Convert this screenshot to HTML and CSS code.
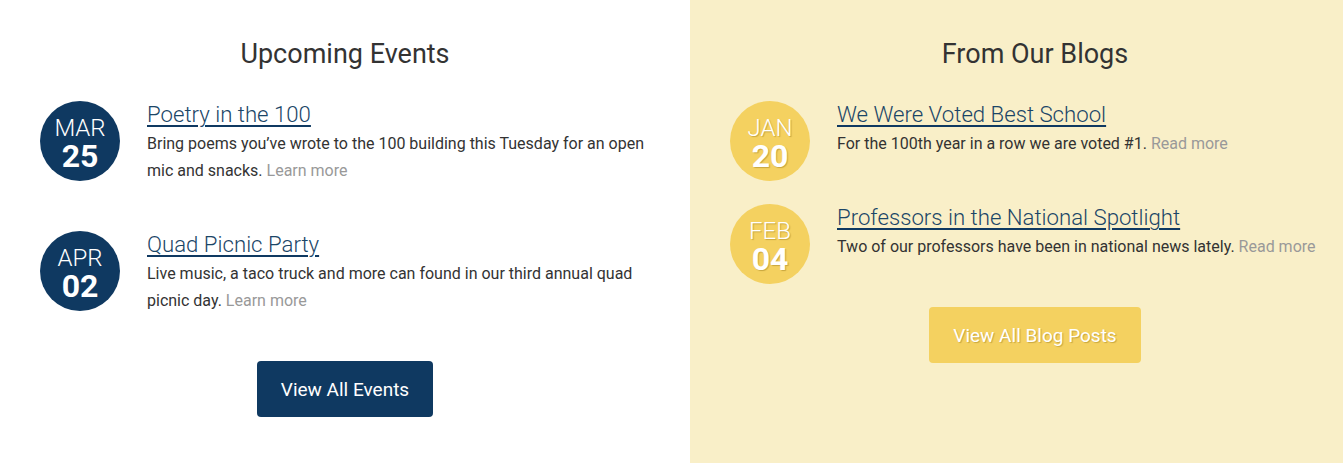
FILE: index.html
```html
<!DOCTYPE html>
<html lang="en">
<head>
<meta charset="utf-8">
<title>Events and Blogs</title>
<link rel="stylesheet" href="styles.css">
</head>
<body>
<div class="split">
  <section class="col col-events">
    <h2 class="col-title">Upcoming Events</h2>
    <div class="item">
      <div class="date date-navy"><span class="month">MAR</span><span class="day">25</span></div>
      <div class="item-body">
        <h3 class="item-title"><a href="#">Poetry in the 100</a></h3>
        <p class="item-text">Bring poems you’ve wrote to the 100 building this Tuesday for an open mic and snacks. <a class="more" href="#">Learn more</a></p>
      </div>
    </div>
    <div class="item">
      <div class="date date-navy"><span class="month">APR</span><span class="day">02</span></div>
      <div class="item-body">
        <h3 class="item-title"><a href="#">Quad Picnic Party</a></h3>
        <p class="item-text">Live music, a taco truck and more can found in our third annual quad picnic day. <a class="more" href="#">Learn more</a></p>
      </div>
    </div>
    <div class="actions"><a class="btn btn-navy" href="#">View All Events</a></div>
  </section>
  <section class="col col-blogs">
    <h2 class="col-title">From Our Blogs</h2>
    <div class="item">
      <div class="date date-yellow"><span class="month">JAN</span><span class="day">20</span></div>
      <div class="item-body">
        <h3 class="item-title"><a href="#">We Were Voted Best School</a></h3>
        <p class="item-text">For the 100th year in a row we are voted #1. <a class="more" href="#">Read more</a></p>
      </div>
    </div>
    <div class="item">
      <div class="date date-yellow"><span class="month">FEB</span><span class="day">04</span></div>
      <div class="item-body">
        <h3 class="item-title"><a href="#">Professors in the National Spotlight</a></h3>
        <p class="item-text">Two of our professors have been in national news lately. <a class="more" href="#">Read more</a></p>
      </div>
    </div>
    <div class="actions"><a class="btn btn-yellow" href="#">View All Blog Posts</a></div>
  </section>
</div>
</body>
</html>
```
FILE: styles.css
```css
html, body {
  margin: 0;
  padding: 0;
}
body {
  font-family: Roboto, "Liberation Sans", Arial, sans-serif;
  color: #333;
  background: #fff;
  overflow: hidden;
  min-height: 100vh;
}
.split {
  display: grid;
  grid-template-columns: 690px 690px;
  min-height: 100vh;
}
.col {
  padding: 38px 40px 40px;
  box-sizing: border-box;
}
.col-blogs {
  background: #f9efc8;
}
.col-title {
  margin: 0 0 31px;
  font-size: 27px;
  line-height: 1.2;
  font-weight: 400;
  text-align: center;
  color: #333;
}
.item {
  display: flex;
  align-items: flex-start;
  gap: 27px;
  margin-bottom: 22px;
}
.date {
  flex: 0 0 80px;
  width: 80px;
  height: 80px;
  border-radius: 50%;
  display: flex;
  flex-direction: column;
  align-items: center;
  justify-content: center;
  color: #fff;
  padding-top: 6px;
  box-sizing: border-box;
}
.date-navy {
  background: #0f3961;
}
.date-yellow {
  background: #f4d160;
  text-shadow: 1px 1px 1px rgba(120, 90, 0, 0.35);
}
.month {
  font-size: 24px;
  line-height: 24px;
  font-weight: 300;
}
.day {
  font-size: 32px;
  line-height: 32px;
  font-weight: 700;
}
.item-body {
  width: 503px;
  padding-top: 1px;
}
.item-title {
  margin: 0 0 4px;
  font-size: 22.2px;
  line-height: 24px;
  font-weight: 300;
}
.item-title a {
  color: #1b4667;
  text-decoration: underline;
  text-decoration-color: #0f3961;
  text-decoration-thickness: 2px;
  text-underline-offset: 3px;
}
.item-text {
  margin: 0 0 25px;
  font-size: 16px;
  line-height: 27px;
  color: #333;
}
.more {
  color: #999;
  text-decoration: none;
}
.actions {
  display: flex;
  justify-content: center;
}
.btn {
  display: inline-flex;
  align-items: center;
  height: 56px;
  padding: 0 24px;
  border-radius: 4px;
  font-size: 19px;
  color: #fff;
  text-decoration: none;
  box-sizing: border-box;
}
.btn-navy {
  background: #0f3961;
}
.btn-yellow {
  background: #f4d160;
  text-shadow: 1px 1px 1px rgba(120, 90, 0, 0.35);
}
```
